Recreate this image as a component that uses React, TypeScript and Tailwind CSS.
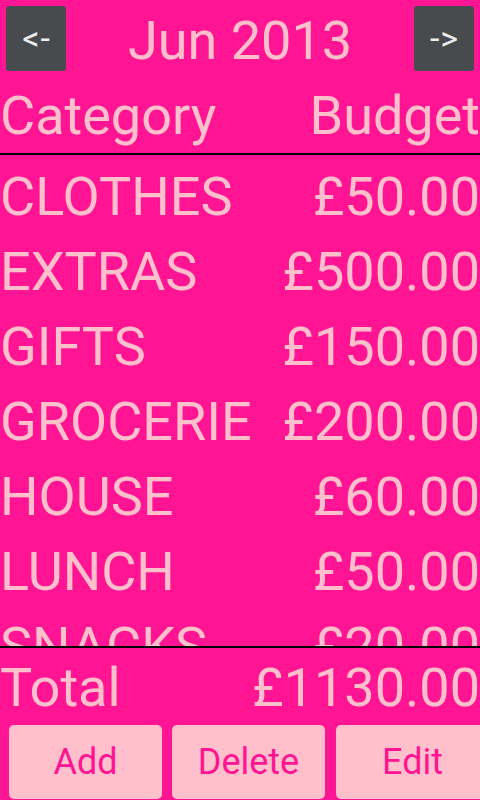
import React from "react";

const rows: [string, string][] = [
  ["CLOTHES", "£50.00"],
  ["EXTRAS", "£500.00"],
  ["GIFTS", "£150.00"],
  ["GROCERIE", "£200.00"],
  ["HOUSE", "£60.00"],
  ["LUNCH", "£50.00"],
  ["SNACKS", "£20.00"],
];

export default function App() {
  return (
    <div
      className="w-[480px] h-[800px] bg-[#ff1493] overflow-hidden flex flex-col text-[#ffc0cb]"
      style={{ fontFamily: "Roboto, 'Noto Sans', sans-serif" }}
    >
      {/* nav */}
      <div className="flex items-start pt-[6px] h-[79px] shrink-0">
        <button className="ml-[6px] w-[60px] h-[65px] rounded-[3px] bg-[#474b4e] text-[#ececec] text-[34px] leading-[65px] tracking-[1px] pl-[1px] flex items-center justify-center">
          {"<-"}
        </button>
        <div className="flex-1 text-center text-[54px] leading-[65px] pt-[2px] whitespace-nowrap">
          Jun 2013
        </div>
        <button className="mr-[6px] w-[60px] h-[65px] rounded-[3px] bg-[#474b4e] text-[#ececec] text-[34px] leading-[65px] tracking-[1px] pl-[1px] flex items-center justify-center">
          {"->"}
        </button>
      </div>

      {/* header */}
      <div className="flex justify-between h-[74px] leading-[74px] text-[54px] shrink-0 whitespace-nowrap">
        <span>Category</span>
        <span>Budget</span>
      </div>
      <div className="h-[2px] bg-black shrink-0" />

      {/* list */}
      <div className="h-[491px] overflow-hidden pt-[4px] shrink-0">
        {rows.map(([c, v]) => (
          <div
            key={c}
            className="flex justify-between h-[75px] leading-[75px] text-[54px] whitespace-nowrap"
          >
            <span>{c}</span>
            <span>{v}</span>
          </div>
        ))}
      </div>
      <div className="h-[2px] bg-black shrink-0" />

      {/* total */}
      <div className="flex justify-between mt-[3px] h-[74px] leading-[74px] text-[54px] shrink-0 whitespace-nowrap">
        <span>Total</span>
        <span>£1130.00</span>
      </div>

      {/* buttons */}
      <div className="flex gap-[10px] pl-[9px] h-[74px] shrink-0">
        <button className="w-[153px] shrink-0 h-[74px] rounded-[5px] bg-[#ffc0cb] text-[#ff1493] text-[36px] leading-[74px]">
          Add
        </button>
        <button className="w-[153px] shrink-0 h-[74px] rounded-[5px] bg-[#ffc0cb] text-[#ff1493] text-[36px] leading-[74px]">
          Delete
        </button>
        <button className="ml-[1px] w-[153px] shrink-0 h-[74px] rounded-[5px] bg-[#ffc0cb] text-[#ff1493] text-[36px] leading-[74px]">
          Edit
        </button>
      </div>
    </div>
  );
}
